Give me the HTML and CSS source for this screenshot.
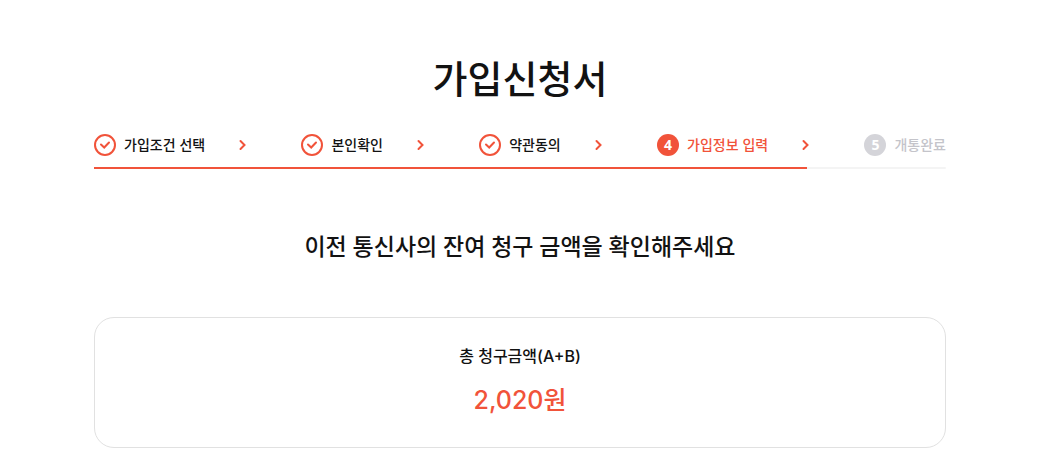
FILE: index.html
```html
<!DOCTYPE html>
<html lang="ko">
<head>
    <meta charset="UTF-8">
    <meta name="viewport" content="width=device-width, initial-scale=1.0">
    <title>가입신청서</title>
    <link rel="stylesheet" href="styles.css">
</head>
<body>
    <main class="container">
        <h1>가입신청서</h1>

        <ol class="steps">
            <li class="step done">
                <svg class="icon" viewBox="0 0 22 22"><circle cx="11" cy="11" r="10"/><path d="M7 10.500l3.200 3 4.800-5"/></svg>
                <span class="name">가입조건 선택</span>
                <svg class="arrow" viewBox="0 0 8 12"><path d="M2.500 2L6.500 6l-4 4"/></svg>
            </li>
            <li class="step done">
                <svg class="icon" viewBox="0 0 22 22"><circle cx="11" cy="11" r="10"/><path d="M7 10.500l3.200 3 4.800-5"/></svg>
                <span class="name">본인확인</span>
                <svg class="arrow" viewBox="0 0 8 12"><path d="M2.500 2L6.500 6l-4 4"/></svg>
            </li>
            <li class="step done">
                <svg class="icon" viewBox="0 0 22 22"><circle cx="11" cy="11" r="10"/><path d="M7 10.500l3.200 3 4.800-5"/></svg>
                <span class="name">약관동의</span>
                <svg class="arrow" viewBox="0 0 8 12"><path d="M2.500 2L6.500 6l-4 4"/></svg>
            </li>
            <li class="step current" aria-current="step">
                <span class="number">4</span>
                <span class="name">가입정보 입력</span>
                <svg class="arrow" viewBox="0 0 8 12"><path d="M2.500 2L6.500 6l-4 4"/></svg>
            </li>
            <li class="step">
                <span class="number">5</span>
                <span class="name">개통완료</span>
            </li>
        </ol>
        <div class="bar"><div class="bar-fill" style="width: 83.7%"></div></div>

        <h2>이전 통신사의 잔여 청구 금액을 확인해주세요</h2>

        <section class="bill">
            <p class="bill-label">총 청구금액(A+B)</p>
            <p class="bill-price">2,020원</p>
        </section>
    </main>
</body>
</html>
```
FILE: styles.css
```css
* {
    box-sizing: border-box;
}

body {
    margin: 0;
    background-color: #fff;
    color: #121212;
    font-family: "Noto Sans CJK KR", sans-serif;
    font-weight: 500;
}

.container {
    padding: 50px 99px 13px 94px;
}

h1 {
    margin: 0;
    font-size: 38px;
    line-height: 54px;
    font-weight: 500;
    text-align: center;
}

/* steps */
.steps {
    display: flex;
    margin: 30px 0 11px;
    padding: 0;
    list-style: none;
}

.step {
    display: flex;
    align-items: center;
    flex: 1 1 auto;
    font-size: 14px;
    line-height: 22px;
    color: #c4c4ca;
    white-space: nowrap;
}

.step:last-child {
    flex: none;
}

.step.done {
    color: #121212;
}

.step.current {
    color: #f1533a;
}

.name {
    padding-bottom: 2px;
    line-height: 20px;
}

.icon,
.number {
    flex: none;
    width: 22px;
    height: 22px;
    margin-right: 8px;
}

.icon,
.arrow {
    fill: none;
    stroke: #f1533a;
    stroke-width: 2;
}

.icon path,
.arrow path {
    stroke-linecap: round;
}

.number {
    border-radius: 50%;
    background-color: #d4d4d9;
    color: #fff;
    font-family: "Noto Sans", sans-serif;
    font-weight: 700;
    text-align: center;
}

.current .number {
    background-color: #f1533a;
}

.arrow {
    width: 8px;
    height: 12px;
    margin-left: 33px;
}

.bar {
    height: 2px;
    border-radius: 1px;
    background-color: #f4f4f4;
}

.bar-fill {
    height: 2px;
    background-color: #f1533a;
}

h2 {
    margin: 59px 0 53px;
    font-family: Lato, "Noto Sans CJK KR", sans-serif;
    font-size: 23px;
    line-height: 36px;
    font-weight: 500;
    text-align: center;
}

/* bill */
.bill {
    padding: 26px 20px 29px;
    border: 1px solid #e1e1e1;
    border-radius: 20px;
    text-align: center;
    font-family: Inter, "Noto Sans CJK KR", sans-serif;
}

.bill p {
    margin: 0;
}

.bill-label {
    font-size: 16px;
    line-height: 24px;
}

.bill .bill-price {
    margin-top: 14px;
    color: #f1533a;
    font-size: 25px;
    line-height: 36px;
}
```
